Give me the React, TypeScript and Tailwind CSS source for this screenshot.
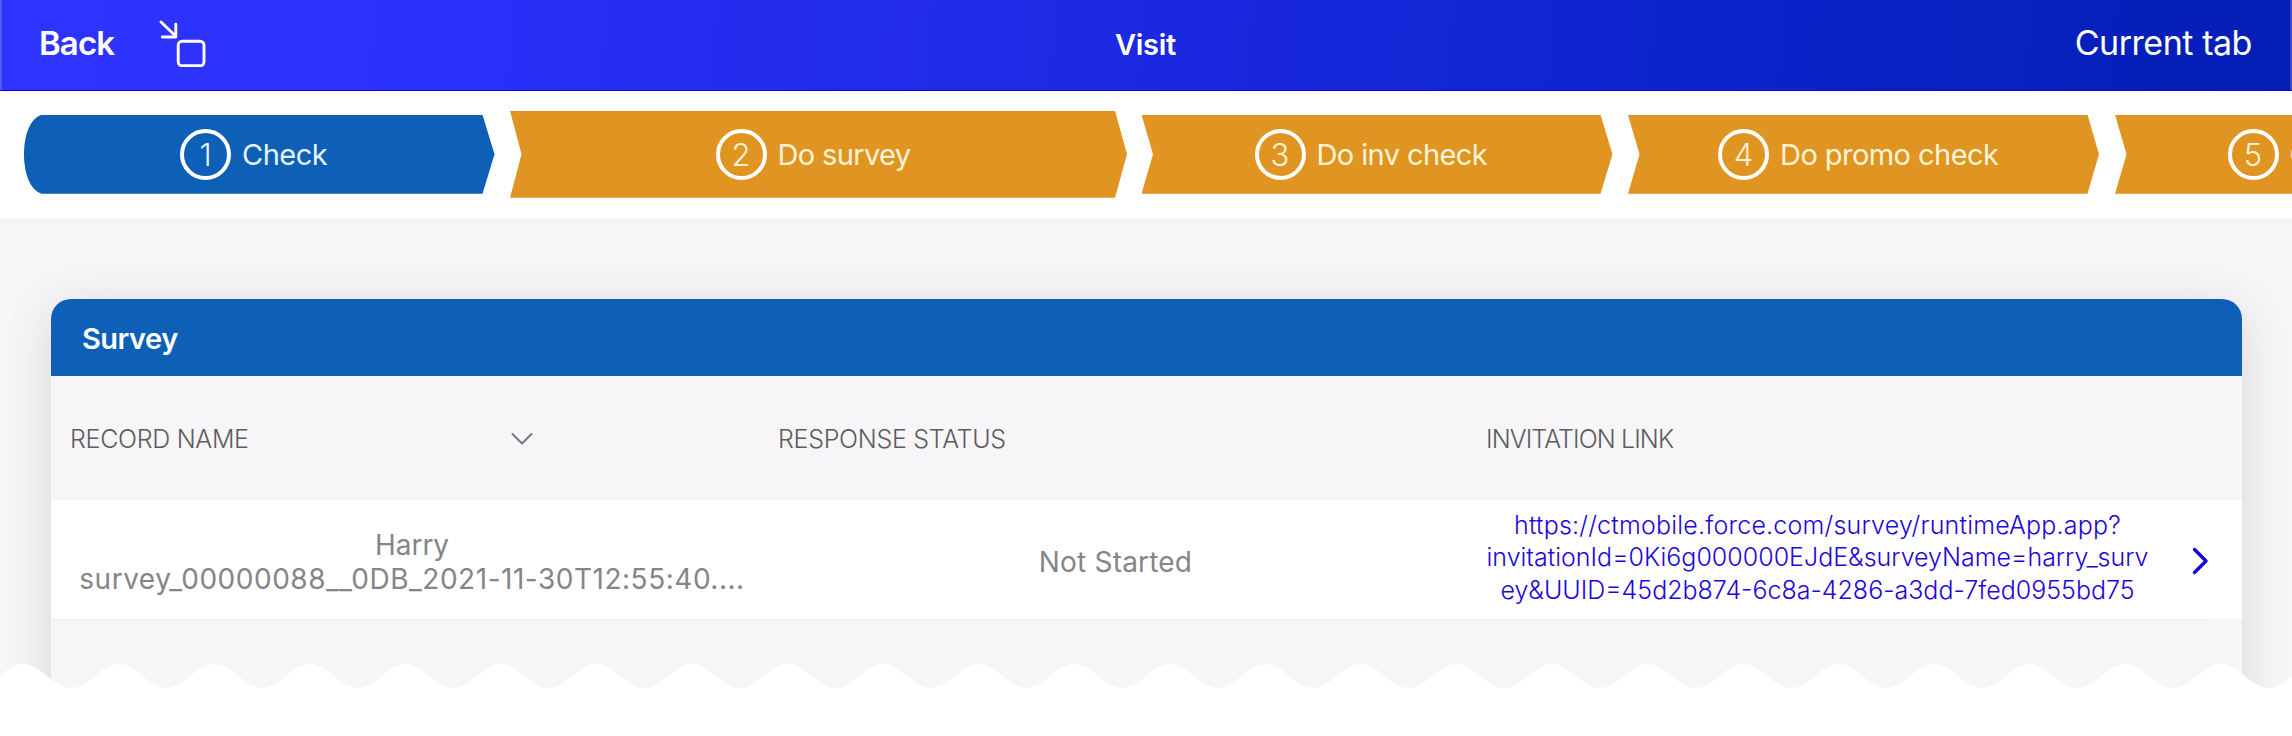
import type { ReactNode } from "react";

type StepProps = {
  n: number;
  label: string;
  shape: string;
  text: string;
};

const steps: StepProps[] = [
  {
    n: 1,
    label: "Check",
    shape:
      "w-[471px] h-[79px] pl-[156px] bg-[#0e5fb6] text-[#e6f6ff] [clip-path:path('M17.5,0_C6,4_0,20_0,39.5_C0,59_6,75_17.5,79_L458.5,79_L470.5,39.5_L458.5,0_Z')]",
    text: "ml-[1px] tracking-[-0.5px]",
  },
  {
    n: 2,
    label: "Do survey",
    shape:
      "ml-[15px] w-[617px] h-[87px] pl-[205.5px] bg-[#e09522] text-[#fff3d6] [clip-path:polygon(0_0,605px_0,617px_50%,605px_100%,0_100%,11.5px_50%)]",
    text: "ml-[1px] tracking-[-0.65px]",
  },
  {
    n: 3,
    label: "Do inv check",
    shape:
      "ml-[14.5px] w-[471px] h-[79px] pl-[113px] bg-[#e09522] text-[#fff3d6] [clip-path:polygon(0_0,459px_0,471px_50%,459px_100%,0_100%,11.5px_50%)]",
    text: "ml-[1px] tracking-[-0.6px]",
  },
  {
    n: 4,
    label: "Do promo check",
    shape:
      "ml-[15.5px] w-[471px] h-[79px] pl-[90px] bg-[#e09522] text-[#fff3d6] [clip-path:polygon(0_0,459.5px_0,471px_50%,459.5px_100%,0_100%,11.5px_50%)]",
    text: "ml-[1px] tracking-[-0.55px]",
  },
  {
    n: 5,
    label: "Close",
    shape:
      "ml-[16px] w-[471px] h-[79px] pl-[112.5px] bg-[#e09522] text-[#fff3d6] [clip-path:polygon(0_0,459px_0,471px_50%,459px_100%,0_100%,11.5px_50%)]",
    text: "ml-[1px] tracking-[-0.5px]",
  },
];

function Step({ n, label, shape, text }: StepProps) {
  return (
    <div className={`flex shrink-0 items-center gap-[10px] ${shape}`}>
      <span className="flex size-[51px] shrink-0 items-center justify-center rounded-full border-4 border-white pt-px text-[31px] leading-none font-[350]">
        {n}
      </span>
      <span className={`text-[29px] leading-none whitespace-nowrap ${text}`}>{label}</span>
    </div>
  );
}

function MinimizeIcon() {
  return (
    <svg className="h-[48px] w-[50px]" viewBox="0 0 50 48" fill="none" stroke="white" strokeWidth="2.9" strokeLinecap="round" strokeLinejoin="round">
      <path d="M3 3 L17.5 17 M17.8 5.2 V18 H4.3" />
      <rect x="20.2" y="22.2" width="25.8" height="24.6" rx="4" />
    </svg>
  );
}

function HeaderCell({ children }: { children: ReactNode }) {
  return (
    <div className="flex w-[708px] shrink-0 items-center pt-[2px] text-[25px] leading-none font-light text-[#5c5c60]">
      {children}
    </div>
  );
}

function wavePath() {
  const half = 47.775;
  const k = half * 0.3642;
  let x = -72.3;
  let d = `M${x} 0`;
  for (let i = 0; i < 26; i++) {
    d += ` C${x + k} 0 ${x + half - k} 24 ${x + half} 24`;
    x += half;
    d += ` C${x + k} 24 ${x + half - k} 0 ${x + half} 0`;
    x += half;
  }
  return `${d} V72 H-73 Z`;
}

export default function App() {
  return (
    <div className="relative flex h-[736px] w-[2292px] flex-col overflow-hidden bg-[#f7f5f8] font-['Inter','Liberation_Sans',sans-serif]">
      <header className="grid h-[91px] shrink-0 grid-cols-3 items-center border-b border-[#0505f0] bg-[linear-gradient(95deg,#2f33ff_0%,#2c31fb_16%,#1b28e0_51%,#0a23c8_78%,#051eb4_100%)] pr-[40px] pb-[4px] pl-[39px] text-white shadow-[inset_2px_0_0_rgba(255,255,255,0.2),inset_-2px_0_0_rgba(255,255,255,0.2)]">
        <div className="flex items-center">
          <span className="w-[79px] text-[33px] leading-none font-semibold tracking-[-0.9px]">Back</span>
          <span className="ml-[40px]">
            <MinimizeIcon />
          </span>
        </div>
        <span className="pt-[2px] text-center text-[29px] leading-none font-semibold tracking-[-0.3px]">Visit</span>
        <span className="text-right text-[34px] leading-none tracking-[-0.45px]">Current tab</span>
      </header>

      <nav className="flex h-[126.5px] shrink-0 items-center overflow-hidden bg-white pl-[24px]">
        {steps.map((s) => (
          <Step key={s.n} {...s} />
        ))}
      </nav>

      <main className="px-[50.5px] pt-[81.5px]">
        <section className="h-[500px] overflow-hidden rounded-t-[20px] bg-[#f7f5f8] shadow-[0_10px_48px_rgba(0,0,0,0.13)]">
          <h2 className="flex h-[77px] items-center bg-[#0e5fb6] pt-px pl-[31.5px] text-[29px] leading-none font-semibold tracking-[-0.5px] text-white">
            Survey
          </h2>
          <div className="flex h-[124px] items-stretch pl-[19.5px]">
            <HeaderCell>
              <span className="w-[440px] tracking-[-0.3px]">RECORD NAME</span>
              <svg className="h-[14px] w-[24px]" viewBox="0 0 24 14" fill="none" stroke="#77777b" strokeWidth="2" strokeLinecap="round" strokeLinejoin="round">
                <path d="M2.5 2 L12 11.5 L21.5 2" />
              </svg>
            </HeaderCell>
            <HeaderCell>
              <span className="tracking-[-0.3px]">RESPONSE STATUS</span>
            </HeaderCell>
            <HeaderCell>
              <span className="tracking-[-0.9px]">INVITATION LINK</span>
            </HeaderCell>
          </div>
          <div className="flex h-[118.5px] items-center bg-white text-[28px] text-[#858588]">
            <div className="w-[723px] pt-[5px] text-center leading-[34px]">
              <div>Harry</div>
              <div className="tracking-[0.52px]">survey_00000088__0DB_2021-11-30T12:55:40....</div>
            </div>
            <div className="w-[684px] pt-[5px] text-center leading-[34px] tracking-[0.2px]">Not Started</div>
            <a className="w-[720px] pb-[4px] text-center text-[25px] leading-[32.5px] font-light text-[#2206d8]">
              <div className="tracking-[0.2px]">https://ctmobile.force.com/survey/runtimeApp.app?</div>
              <div>invitationId=0Ki6g000000EJdE&amp;surveyName=harry_surv</div>
              <div>ey&amp;UUID=45d2b874-6c8a-4286-a3dd-7fed0955bd75</div>
            </a>
            <svg className="mt-[4px] ml-[13.5px] h-[28px] w-[18px]" viewBox="0 0 18 28" fill="none" stroke="#1400d8" strokeWidth="3.4" strokeLinecap="round" strokeLinejoin="round">
              <path d="M3.5 2.5 L15 14 L3.5 25.5" />
            </svg>
          </div>
          <div className="mr-[31px] h-px bg-[#f0eef1]" />
        </section>
      </main>

      <svg className="absolute bottom-0 left-0 h-[72px] w-[2292px]" viewBox="0 0 2292 72" fill="white">
        <path d={wavePath()} />
      </svg>
    </div>
  );
}
